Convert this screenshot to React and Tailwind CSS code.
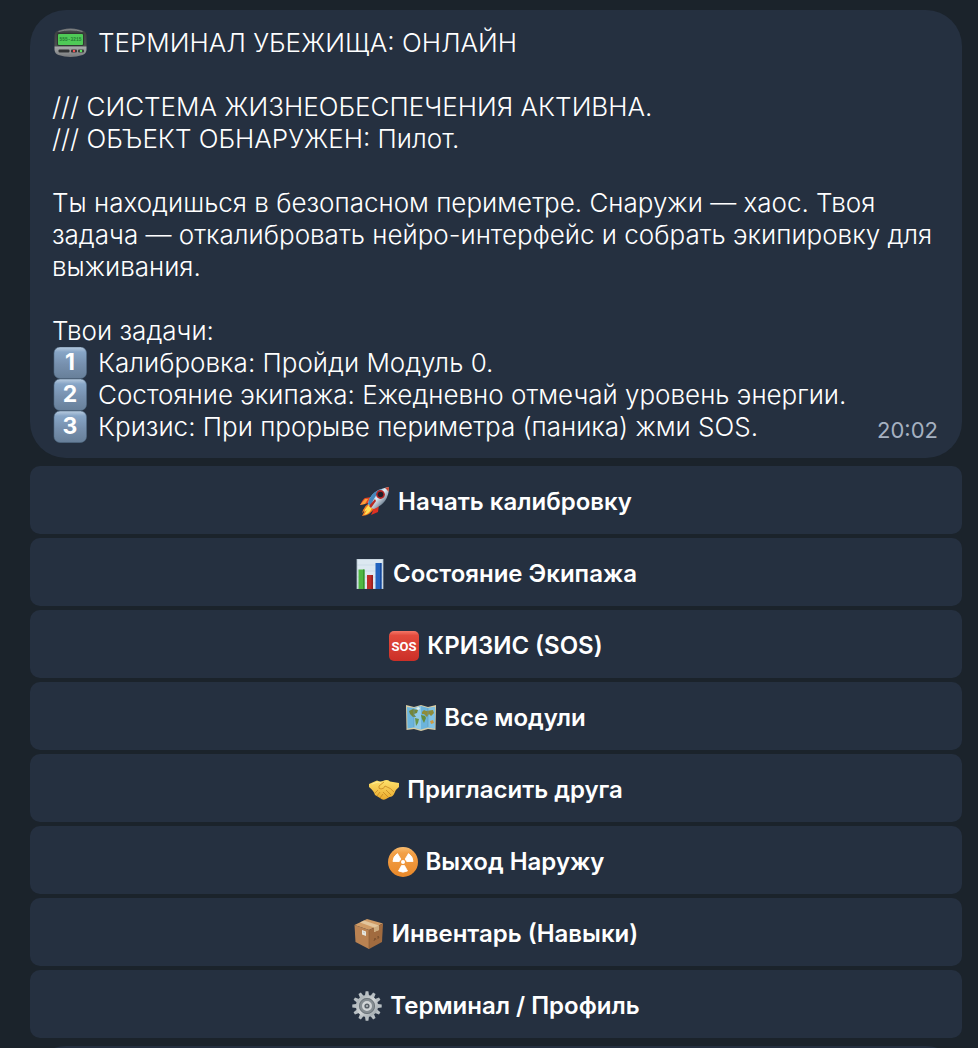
import React from "react";

const PagerIcon = () => (
  <svg viewBox="-1.5 0 36 30" className="w-9 h-[30px] shrink-0" aria-hidden="true">
    <defs>
      <linearGradient id="pagerBody" x1="0" y1="0" x2="0" y2="1">
        <stop offset="0" stopColor="#77797b" />
        <stop offset="0.12" stopColor="#3d4042" />
        <stop offset="0.6" stopColor="#4c4f51" />
        <stop offset="0.66" stopColor="#a5a7a8" />
        <stop offset="1" stopColor="#77797b" />
      </linearGradient>
    </defs>
    <path d="M9 1.500Q17-0.500 25 1.500L30 3Q33 4 33 8V22Q32.500 26 29 27Q17 31 5 27Q1.500 26 1 22V8Q1 4 4 3Z" fill="url(#pagerBody)" />
    <path d="M5 3.500Q17 0 29 3.500" fill="none" stroke="#929597" strokeWidth="0.8" />
    <rect x="3.500" y="5" width="27" height="13" rx="2" fill="#303632" />
    <rect x="4.500" y="6" width="25" height="11" rx="1" fill="#4fc957" />
    <text x="17" y="13" textAnchor="middle" fontSize="4.600" fontFamily="Liberation Mono, monospace" fontWeight="700" fill="#237a32">555-3215</text>
    <rect x="5" y="21.500" width="11" height="3" rx="1" fill="#303234" />
    <rect x="17.500" y="21.500" width="6" height="3" rx="1" fill="#343334" />
    <rect x="24.500" y="21.500" width="6" height="3" rx="1" fill="#343b34" />
    <circle cx="20.500" cy="23" r="1.200" fill="#f45454" />
    <circle cx="27.500" cy="23" r="1.200" fill="#59e65d" />
  </svg>
);

const KeycapIcon = ({ digit }) => (
  <svg viewBox="-1.5 0 36 32" className="w-9 h-8 shrink-0" role="img" aria-label={digit}>
    <defs>
      <linearGradient id={`keycap${digit}`} x1="0" y1="0" x2="0" y2="1">
        <stop offset="0" stopColor="#b9cce0" />
        <stop offset="0.16" stopColor="#87a5c6" />
        <stop offset="0.55" stopColor="#7790ae" />
        <stop offset="1" stopColor="#677f99" />
      </linearGradient>
    </defs>
    <rect x="0.500" y="0" width="32.500" height="31.500" rx="6" fill={`url(#keycap${digit})`} stroke="#536b84" strokeWidth="0.6" />
    <text x="16.500" y="22.500" textAnchor="middle" fontFamily="Inter, sans-serif" fontSize="23" fontWeight="700" fill="#fff">{digit}</text>
  </svg>
);

const RocketIcon = () => (
  <svg viewBox="0 0 30 30" className="size-[30px] shrink-0" aria-hidden="true">
    <defs>
      <linearGradient id="rocketBody" x1="0.2" y1="0.2" x2="0.8" y2="0.8">
        <stop offset="0" stopColor="#5d9dd0" />
        <stop offset="0.45" stopColor="#e3edf5" />
        <stop offset="0.7" stopColor="#a8b5c3" />
        <stop offset="1" stopColor="#55697d" />
      </linearGradient>
    </defs>
    <path d="M12 10L5 11Q3 12 0 18L9 16Z" fill="#e84725" />
    <path d="M0 18L5 12L8 12L5 17Z" fill="#f9a13a" />
    <path d="M19 18L18 25L11 28Q13 25 13 21Z" fill="#df3021" />
    <path d="M8 17Q4 19 2 26L5 23L2 29Q11 28 14 21Z" fill="#f57c20" />
    <path d="M9 18Q5 21 4 25L7 23L4 28Q11 26 12 20Z" fill="#ffe052" />
    <path d="M8 17Q10 3 29 0Q29 16 14 22Q10 21 8 17Z" fill="url(#rocketBody)" />
    <path d="M8 17Q10 5 22 2Q14 9 11 19Z" fill="#4586bb" />
    <path d="M25 1Q27 0.300 29 0Q29 2 28.500 5Q27.500 3 25 1Z" fill="#c94531" />
    <circle cx="20.500" cy="7.500" r="4.400" fill="#b52625" />
    <circle cx="20.500" cy="7.500" r="2.800" fill="#201e29" />
    <path d="M9 19L15 12L16 14L11 21Z" fill="#b92a22" />
  </svg>
);

const ChartIcon = () => (
  <svg viewBox="0 0 30 30" className="size-[30px] shrink-0" aria-hidden="true">
    <rect x="2" y="0" width="26" height="30" fill="#dce8f1" />
    <path d="M2 6H28M2 12H28M2 18H28M2 24H28" stroke="#c4d4e2" strokeWidth="0.6" />
    <path d="M2 0H28V30H2Z" fill="none" stroke="#b1c1ce" strokeWidth="0.8" />
    <path d="M3.500 10.500H9.500V30H3.500Z" fill="#4fb641" />
    <path d="M8 10.500H9.500V30H8Z" fill="#399530" />
    <path d="M12 16H18V30H12Z" fill="#bd2c29" />
    <path d="M16.500 16H18V30H16.500Z" fill="#96201e" />
    <path d="M20.500 4H26.500V30H20.500Z" fill="#2364bf" />
    <path d="M25 4H26.500V30H25Z" fill="#17499a" />
  </svg>
);

const SosIcon = () => (
  <svg viewBox="0 0 30 30" className="size-[30px] shrink-0" aria-hidden="true">
    <defs>
      <linearGradient id="sosFill" x1="0" y1="0" x2="0" y2="1">
        <stop offset="0" stopColor="#f47768" />
        <stop offset="0.15" stopColor="#e24b3d" />
        <stop offset="1" stopColor="#cb2f27" />
      </linearGradient>
    </defs>
    <rect width="30" height="30" rx="5" fill="url(#sosFill)" />
    <text x="15" y="19.500" textAnchor="middle" fontFamily="Roboto, sans-serif" fontSize="13" fontWeight="700" fill="#fff">SOS</text>
  </svg>
);

const MapIcon = () => (
  <svg viewBox="0 0 30 30" className="size-[30px] shrink-0" aria-hidden="true">
    <path d="M0 2L8 4L15 2L22 4L30 2L29.500 27L22 26L15 28L8 26L0.500 27Z" fill="#d8cda6" />
    <path d="M1 4L8 5L15 3L22 5L29 4L28.500 25.500L22 24.500L15 26.500L8 24.500L1.500 25.500Z" fill="#6bb4dc" />
    <path d="M8 5L15 3V26.500L8 24.500Z" fill="#91cbe7" />
    <path d="M22 5L29 4L28.500 25.500L22 24.500Z" fill="#82c3e4" />
    <path d="M3 8L7 6L12 7L11 10L8 11L10 14L7 14L4 11Z" fill="#748639" />
    <path d="M9 15L13 16L12 20L10 23Z" fill="#68944a" />
    <path d="M10 5L13 4L14 6L12 7Z" fill="#e3eee9" />
    <path d="M16 9L18 7L20 8L27 7L28 10L25 13L23 11L21 14L18 11L16 11Z" fill="#908c39" />
    <path d="M15 12L19 13L20 15L18 20L16 16Z" fill="#658d3e" />
    <path d="M24 18L27 17L28 20L25 21Z" fill="#ce9a3e" />
    <path d="M8 5V24M22 5V24" stroke="#5d99ba" strokeWidth="0.6" />
  </svg>
);

const HandshakeIcon = () => (
  <svg viewBox="0 0 30 30" className="size-[30px] shrink-0" aria-hidden="true">
    <defs>
      <linearGradient id="handFill" x1="0" y1="0" x2="0" y2="1">
        <stop offset="0" stopColor="#ffe26c" />
        <stop offset="1" stopColor="#eaa92b" />
      </linearGradient>
    </defs>
    <path d="M0 9L8 5.500Q11 7 14 6Q18 4 21 6.500L30 8V12Q26 15 25.500 18Q24 22 20.500 22L17 24Q14 26 11 23L6 20Q5 16 0 12Z" fill="url(#handFill)" />
    <path d="M15 7L10 11Q9 14 12 14Q15 14 16 11Q22 13 25 17" fill="none" stroke="#c78622" strokeWidth="0.8" />
    <path d="M6 18L9 15M8 21L11 17M11 23L14 19M14 17L19 22M17 15L22 20" fill="none" stroke="#c2831d" strokeWidth="0.7" />
    <path d="M3 9L9 7L12 8" fill="none" stroke="#fff0a2" strokeWidth="0.7" />
  </svg>
);

const RadiationIcon = () => (
  <svg viewBox="0 0 30 30" className="size-[30px] shrink-0" aria-hidden="true">
    <defs>
      <linearGradient id="radiationFill" x1="0" y1="0" x2="0" y2="1">
        <stop offset="0" stopColor="#f9bd70" />
        <stop offset="0.2" stopColor="#f2a047" />
        <stop offset="1" stopColor="#e98829" />
      </linearGradient>
    </defs>
    <circle cx="15" cy="15" r="15" fill="url(#radiationFill)" />
    <circle cx="15" cy="15" r="2" fill="#fff" />
    <g fill="#fff" stroke="#fff" strokeWidth="0.8" strokeLinejoin="round">
      <path d="M13.500 18.500H16.500L19.500 24Q15 26.300 10.500 24Z" />
      <path d="M13.500 18.500H16.500L19.500 24Q15 26.300 10.500 24Z" transform="rotate(120 15 15)" />
      <path d="M13.500 18.500H16.500L19.500 24Q15 26.300 10.500 24Z" transform="rotate(240 15 15)" />
    </g>
  </svg>
);

const BoxIcon = () => (
  <svg viewBox="0 0 30 30" className="size-[30px] shrink-0" aria-hidden="true">
    <path d="M0.500 6L13 0L29 4.500L15 11Z" fill="#cf9b66" />
    <path d="M0.500 6L15 11V30L1.500 23Z" fill="#b98252" />
    <path d="M15 11L29 4.500L28 23L15 30Z" fill="#a16b3f" />
    <path d="M6 3.500L10 1.500L25 6.500V11L20 13V8.500Z" fill="#e2c59c" />
    <path d="M20 8.500L25 6.500V11L20 13Z" fill="#cfae81" />
    <path d="M8 11L12 12.500V17L8 15.500Z" fill="#e7e5dc" />
    <path d="M9 13L11 14" stroke="#a9b4bc" strokeWidth="0.6" />
    <path d="M20 22L21 19L22 21M24 20V17L25 19" fill="none" stroke="#744b2b" strokeWidth="0.8" />
    <path d="M15 11V29" stroke="#835733" strokeWidth="0.6" />
  </svg>
);

const GearIcon = () => (
  <svg viewBox="0 0 30 30" className="size-[30px] shrink-0" aria-hidden="true">
    <defs>
      <linearGradient id="gearFill" x1="0" y1="0" x2="1" y2="1">
        <stop offset="0" stopColor="#a5adb1" />
        <stop offset="0.5" stopColor="#d0d4d6" />
        <stop offset="1" stopColor="#9ca5aa" />
      </linearGradient>
    </defs>
    <g fill="#b8bfc3">
      {[0, 30, 60, 90, 120, 150, 180, 210, 240, 270, 300, 330].map((angle) => (
        <path key={angle} d="M12.800 6L13.600 0.300H16.400L17.200 6Z" transform={`rotate(${angle} 15 15)`} />
      ))}
    </g>
    <circle cx="15" cy="15" r="9.500" fill="#858d92" stroke="url(#gearFill)" strokeWidth="3.200" />
    <circle cx="15" cy="15" r="7.600" fill="none" stroke="#646d73" strokeWidth="0.8" />
    <circle cx="15" cy="15" r="3.800" fill="#596168" stroke="#d1d5d7" strokeWidth="2.400" />
    <circle cx="15" cy="15" r="1" fill="#b9c0c4" />
  </svg>
);

const menuItems = [
  { title: "Начать калибровку", Icon: RocketIcon },
  { title: "Состояние Экипажа", Icon: ChartIcon },
  { title: "КРИЗИС (SOS)", Icon: SosIcon },
  { title: "Все модули", Icon: MapIcon },
  { title: "Пригласить друга", Icon: HandshakeIcon },
  { title: "Выход Наружу", Icon: RadiationIcon },
  { title: "Инвентарь (Навыки)", Icon: BoxIcon },
  { title: "Терминал / Профиль", Icon: GearIcon },
];

const tasks = [
  "Калибровка: Пройди Модуль 0.",
  "Состояние экипажа: Ежедневно отмечай уровень энергии.",
  "Кризис: При прорыве периметра (паника) жми SOS.",
];

const App = () => {
  return (
    <main className="h-screen overflow-hidden bg-[#1b232b] pt-[10px] pr-4 pl-[30px] font-['Inter',sans-serif] text-white">
      {/* Message bubble */}
      <article className="rounded-[36px] bg-[#253040] pt-[17px] pr-3 pb-[15px] pl-[22px] text-[26px] leading-8 font-light">
        <h1 className="flex items-center gap-[10px] font-light">
          <PagerIcon />
          ТЕРМИНАЛ УБЕЖИЩА: ОНЛАЙН
        </h1>
        <p className="mt-8">
          /// СИСТЕМА ЖИЗНЕОБЕСПЕЧЕНИЯ АКТИВНА.
          <br />
          /// ОБЪЕКТ ОБНАРУЖЕН: Пилот.
        </p>
        <p className="mt-8">
          Ты находишься в безопасном периметре. Снаружи — хаос. Твоя задача — откалибровать нейро-интерфейс и собрать экипировку для выживания.
        </p>
        <p className="mt-8">Твои задачи:</p>
        <div className="flex items-end justify-between">
          <ol>
            {tasks.map((task, index) => (
              <li key={task} className="flex items-center gap-[10px]">
                <KeycapIcon digit={String(index + 1)} />
                {task}
              </li>
            ))}
          </ol>
          <time className="pr-3 text-[22px] leading-[26px] font-normal text-[#a5b1c1]">20:02</time>
        </div>
      </article>

      {/* Inline keyboard */}
      <nav className="mt-2 flex flex-col gap-1">
        {menuItems.map(({ title, Icon }) => (
          <button
            key={title}
            type="button"
            className="flex h-[68px] cursor-pointer items-center justify-center gap-2 rounded-[10px] bg-[#253040] pt-1 text-2xl font-semibold hover:bg-[#2c394b]"
          >
            <Icon />
            {title}
          </button>
        ))}
      </nav>

      {/* Next message */}
      <article className="mt-2 h-24 rounded-[36px] bg-[#253040]"></article>
    </main>
  );
};

export default App;
